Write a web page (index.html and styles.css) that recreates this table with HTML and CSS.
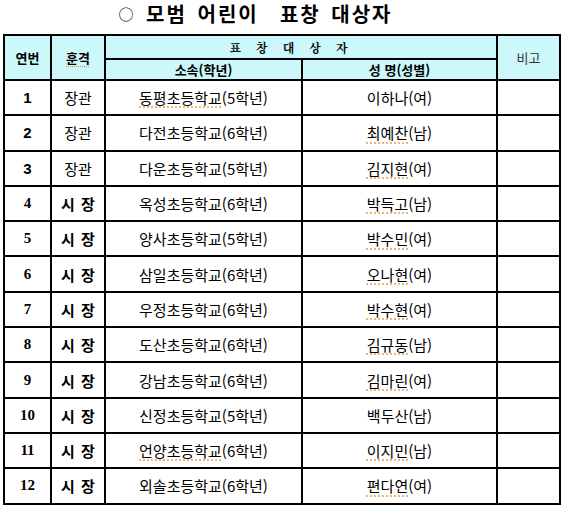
FILE: index.html
```html
<!DOCTYPE html>
<html lang="ko">
<head>
<meta charset="utf-8">
<link rel="stylesheet" href="styles.css">
</head>
<body>
<div class="page">
  <h1 class="title"><span class="circ">○</span> 모범 어린이 &nbsp;표창 대상자</h1>
  <table class="tbl">
    <colgroup>
      <col class="c1"><col class="c2"><col class="c3"><col class="c4"><col class="c5">
    </colgroup>
    <thead>
      <tr class="h1">
        <th rowspan="2" class="hb">연번</th>
        <th rowspan="2" class="hb"><span class="sp">훈격</span></th>
        <th colspan="2" class="hs">표창대상자</th>
        <th rowspan="2" class="hn">비고</th>
      </tr>
      <tr class="h2">
        <th class="hb">소속(학년)</th>
        <th class="hb">성 명(성별)</th>
      </tr>
    </thead>
    <tbody>
      <tr><td class="n ns">1</td><td class="g">장관</td><td><span class="sp">동평초등학교</span>(5학년)</td><td>이하나(여)</td><td></td></tr>
      <tr><td class="n ns">2</td><td class="g">장관</td><td>다전초등학교(6학년)</td><td><span class="sp">최예찬</span>(남)</td><td></td></tr>
      <tr><td class="n ns">3</td><td class="g">장관</td><td>다운초등학교(5학년)</td><td><span class="sp">김지현</span>(여)</td><td></td></tr>
      <tr><td class="n">4</td><td class="g b">시 장</td><td>옥성초등학교(6학년)</td><td><span class="sp">박득고</span>(남)</td><td></td></tr>
      <tr><td class="n">5</td><td class="g b">시 장</td><td>양사초등학교(5학년)</td><td><span class="sp">박수민</span>(여)</td><td></td></tr>
      <tr><td class="n">6</td><td class="g b">시 장</td><td>삼일초등학교(6학년)</td><td><span class="sp">오나현</span>(여)</td><td></td></tr>
      <tr><td class="n">7</td><td class="g b">시 장</td><td>우정초등학교(6학년)</td><td><span class="sp">박수현</span>(여)</td><td></td></tr>
      <tr><td class="n">8</td><td class="g b">시 장</td><td>도산초등학교(6학년)</td><td><span class="sp">김규동</span>(남)</td><td></td></tr>
      <tr><td class="n">9</td><td class="g b">시 장</td><td>강남초등학교(6학년)</td><td><span class="sp">김마린</span>(여)</td><td></td></tr>
      <tr><td class="n">10</td><td class="g b">시 장</td><td>신정초등학교(5학년)</td><td>백두산(남)</td><td></td></tr>
      <tr><td class="n">11</td><td class="g b">시 장</td><td><span class="sp">언양초등학교</span>(6학년)</td><td><span class="sp">이지민</span>(남)</td><td></td></tr>
      <tr><td class="n">12</td><td class="g b">시 장</td><td>외솔초등학교(6학년)</td><td><span class="sp">편다연</span>(여)</td><td></td></tr>
    </tbody>
  </table>
</div>
</body>
</html>
```
FILE: styles.css
```css
html, body {
  margin: 0;
  padding: 0;
  background: #ffffff;
}
body {
  font-family: "Noto Sans CJK KR", "Noto Sans", sans-serif;
  color: #000;
}
.page {
  width: 564px;
  padding: 0 0 0 3px;
  box-sizing: border-box;
}
.title {
  margin: 0;
  height: 34px;
  line-height: 28px;
  font-size: 20px;
  font-weight: 700;
  text-align: center;
  padding-right: 56px;
  letter-spacing: 2px;
  word-spacing: 3px;
  box-sizing: border-box;
}
.circ {
  font-size: 15px;
  font-weight: 400;
  vertical-align: 2px;
}
.tbl {
  border-collapse: collapse;
  width: 556px;
  table-layout: fixed;
  font-size: 15px;
}
.c1 { width: 47px; }
.c2 { width: 54px; }
.c3 { width: 197px; }
.c4 { width: 195px; }
.c5 { width: 63px; }
.tbl th, .tbl td {
  border: 2px solid #000;
  padding: 0;
  text-align: center;
  vertical-align: middle;
}
.tbl thead th {
  background: #ccf7fb;
}
.h1 th { height: 22px; }
.h2 th { height: 19px; border-top-width: 1px; }
.hb {
  font-weight: 700;
  font-size: 13px;
}
.tbl thead .hs {
  font-family: "Noto Serif CJK KR", "Noto Sans CJK KR", serif;
  font-weight: 700;
  font-size: 12px;
  letter-spacing: 15px;
  padding-right: 10px;
}
.hn {
  font-weight: 400;
  font-size: 13px;
  color: #333;
}
.tbl tbody tr { height: 35.3px; }
.tbl tbody td {
  font-size: 15px;
}
.n {
  font-family: "Liberation Serif", serif;
  font-weight: 700;
  font-size: 16px;
}
.ns {
  font-family: "Liberation Sans", sans-serif;
}
.b { font-weight: 700; word-spacing: 2px; }
.sp {
  text-decoration: underline dotted #e4a04a;
  text-underline-offset: 3px;
}
```
